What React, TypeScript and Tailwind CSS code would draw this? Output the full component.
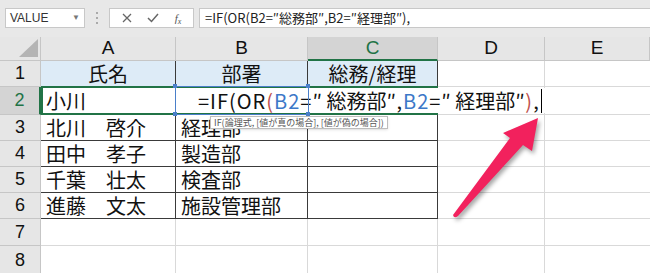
import React from "react";

const jp = { fontFamily: '"Noto Sans CJK JP", "Noto Sans", sans-serif' };
const lat = { fontFamily: '"Liberation Sans", Arial, sans-serif' };

const cols = ["A", "B", "C", "D", "E"];
const rows = [
  { n: "1", a: "氏名", b: "部署", c: "総務/経理", head: true },
  { n: "2", a: "小川", b: "", c: "" },
  { n: "3", a: "北川　啓介", b: "経理部", c: "" },
  { n: "4", a: "田中　孝子", b: "製造部", c: "" },
  { n: "5", a: "千葉　壮太", b: "検査部", c: "" },
  { n: "6", a: "進藤　文太", b: "施設管理部", c: "" },
  { n: "7", a: "", b: "", c: "", empty: true },
  { n: "8", a: "", b: "", c: "", empty: true },
];

function Toolbar() {
  return (
    <div className="h-[37px] bg-[#e8e8e8] pt-[8px] flex items-start" style={lat}>
      {/* name box */}
      <div className="ml-[5px] w-[80px] h-[20px] bg-white border border-[#c8c8c8] flex items-center justify-between px-[4px] text-[12px] text-[#333]">
        <span>VALUE</span>
        <span className="text-[8px] text-[#777]">▼</span>
      </div>
      <div className="w-[24px] h-[20px] flex flex-col items-center justify-center gap-[3px]">
        <span className="w-[2px] h-[2px] bg-[#aaa]" />
        <span className="w-[2px] h-[2px] bg-[#aaa]" />
        <span className="w-[2px] h-[2px] bg-[#aaa]" />
      </div>
      {/* buttons */}
      <div className="w-[85px] h-[20px] bg-white border border-[#c8c8c8] flex items-center justify-around px-[4px] text-[#555]">
        <svg width="10" height="10" viewBox="0 0 10 10">
          <path d="M1 1L9 9M9 1L1 9" stroke="#666" strokeWidth="1.3" />
        </svg>
        <svg width="12" height="10" viewBox="0 0 12 10">
          <path d="M1 5L4.5 8.5L11 1" stroke="#666" strokeWidth="1.5" fill="none" />
        </svg>
        <span className="italic text-[11px] text-[#555]" style={{ fontFamily: '"Liberation Serif", serif' }}>
          f<sub className="text-[8px]">x</sub>
        </span>
      </div>
      {/* formula input */}
      <div className="ml-[5px] flex-1 h-[20px] bg-white border-y border-l border-[#c8c8c8] flex items-center pl-[5px] text-[13px] text-[#222]" style={jp}>
        =IF(OR(B2=″総務部″,B2=″経理部″),
      </div>
    </div>
  );
}

function Q({ open }: { open?: boolean }) {
  return <span className={open ? "inline-block w-[14px]" : "inline-block w-[10px]"}>″</span>;
}

function Sheet() {
  const dark = "border-[#3a3a3a]";
  return (
    <div className="relative">
      <div className="grid grid-cols-[41px_135px_132px_130px_107px_1fr] grid-rows-[24px_26px_28px_26px_26px_26px_26px_27px_30px]">
        {/* header row */}
        <div className="bg-[#e6e6e6] border-r border-b border-[#c6c6c6] flex items-end justify-end pr-[2px] pb-[3px]">
          <svg width="19" height="18" viewBox="0 0 19 18">
            <path d="M19 0L19 18L0 18Z" fill="#b4b4b4" />
          </svg>
        </div>
        {cols.map((c) => (
          <div
            key={c}
            className={
              c === "C"
                ? "bg-[#d4d4d4] border-r border-[#c6c6c6] border-b-2 border-b-[#217346] text-[#217346] flex items-center justify-center text-[19px]"
                : "bg-[#e6e6e6] border-r border-b border-[#c6c6c6] text-[#111] flex items-center justify-center text-[19px]"
            }
            style={lat}
          >
            {c}
          </div>
        ))}
        {rows.map((r) => (
          <React.Fragment key={r.n}>
            <div
              className={
                r.n === "2"
                  ? "bg-[#d4d4d4] border-r-2 border-r-[#217346] border-b border-[#c6c6c6] text-[#217346] flex items-center justify-center text-[18px]"
                  : "bg-[#e6e6e6] border-r border-b border-[#c6c6c6] text-[#111] flex items-center justify-center text-[18px]"
              }
              style={lat}
            >
              {r.n}
            </div>
            {r.empty ? (
              <>
                <div className="border-r border-b border-[#d9d9d9]" />
                <div className="border-r border-b border-[#d9d9d9]" />
                <div className="border-r border-b border-[#d9d9d9]" />
              </>
            ) : (
              <>
                <div
                  className={`border-r border-b ${dark} ${r.head ? "bg-[#ddebf7] justify-center" : "bg-white pl-[5px]"} flex items-center text-[20px] text-[#111] whitespace-pre`}
                  style={jp}
                >
                  {r.a}
                </div>
                <div
                  className={`border-r border-b ${dark} ${r.head ? "bg-[#ddebf7] justify-center" : "bg-white pl-[5px]"} flex items-center text-[20px] text-[#111]`}
                  style={jp}
                >
                  {r.b}
                </div>
                <div
                  className={`border-r border-b ${dark} ${r.head ? "bg-[#ddebf7] justify-center" : "bg-white"} flex items-center text-[20px] text-[#111]`}
                  style={jp}
                >
                  {r.c}
                </div>
              </>
            )}
            <div className="border-r border-b border-[#d9d9d9]" />
            <div className="border-b border-[#d9d9d9]" />
          </React.Fragment>
        ))}
      </div>

      {/* active editing area (green) */}
      <div className="absolute left-[41px] top-[49px] w-[397px] h-[29px] border-2 border-[#217346] pointer-events-none" />

      {/* in-cell formula editor text */}
      <div
        className="absolute left-[177px] top-[51px] w-[374px] h-[25px] bg-white flex items-center pl-[21px] text-[20px] text-[#111] whitespace-nowrap tracking-[1px]"
        style={jp}
      >
        <span>=IF(OR</span>
        <span className="text-[#c0504d]">(</span>
        <span className="text-[#3c78c8]">B2</span>
        <span>=</span>
        <Q open />
        <span className="tracking-normal">総務部</span>
        <Q />
        <span>,</span>
        <span className="text-[#3c78c8]">B2</span>
        <span>=</span>
        <Q open />
        <span className="tracking-normal">経理部</span>
        <Q />
        <span className="text-[#c0504d]">)</span>
        <span>,</span>
        <span className="ml-[1px] w-[1px] h-[24px] bg-black" />
      </div>

      {/* B2 reference highlight */}
      <div className="absolute left-[175px] top-[49px] w-[134px] h-[29px] border border-[#4a7fc9] pointer-events-none" />
      <span className="absolute left-[173px] top-[47px] w-[4px] h-[4px] bg-[#4a7fc9]" />
      <span className="absolute left-[306px] top-[47px] w-[4px] h-[4px] bg-[#4a7fc9]" />
      <span className="absolute left-[173px] top-[75px] w-[4px] h-[4px] bg-[#4a7fc9]" />
      <span className="absolute left-[306px] top-[75px] w-[4px] h-[4px] bg-[#4a7fc9]" />

      {/* function tooltip */}
      <div
        className="absolute left-[210px] top-[79px] h-[13px] px-[3px] bg-white border border-[#bdbdbd] text-[9px] leading-[11px] text-[#555] whitespace-nowrap shadow-sm"
        style={jp}
      >
        IF(論理式, [値が真の場合], [値が偽の場合])
      </div>

      {/* arrow */}
      <svg
        className="absolute left-0 top-0 pointer-events-none"
        width="650"
        height="236"
        viewBox="0 37 650 236"
        style={{ filter: "drop-shadow(2px 3px 2px rgba(0,0,0,0.35))" }}
      >
        <path
          d="M538 118 L532 151 L523 145 L458 216 Q454 219 453 215 L510 138 L503 133 Z"
          fill="#f2215d"
        />
      </svg>
    </div>
  );
}

export default function App() {
  return (
    <div className="w-[650px] h-[273px] overflow-hidden bg-white">
      <Toolbar />
      <Sheet />
    </div>
  );
}
